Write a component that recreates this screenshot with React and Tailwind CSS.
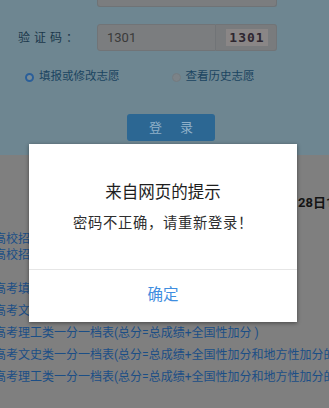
export default function App() {
  const cjk = { fontFamily: 'Roboto, "Noto Sans CJK SC", sans-serif' };
  const links = [
    "高考填报志愿指南及注意事项说明",
    "高考文史类一分一档表(总分=总成绩+全国性加分 )",
    "高考理工类一分一档表(总分=总成绩+全国性加分 )",
    "高考文史类一分一档表(总分=总成绩+全国性加分和地方性加分的最高值)",
    "高考理工类一分一档表(总分=总成绩+全国性加分和地方性加分的最高值)",
  ];
  return (
    <div className="relative w-[329px] h-[408px] overflow-hidden bg-[#7f7f7f]" style={cjk}>
      {/* top form section */}
      <div className="h-[155px] bg-[#6e8691] flex flex-col">
        <div className="ml-[97px] w-[180px] h-[7px] bg-[#7b7d7f] border border-t-0 border-[#6f7376] rounded-b-[3px]" />
        <div className="mt-[17px] flex items-center h-[27px]">
          <div className="w-[97px] pl-[18px] text-[12px] tracking-[4px] text-[#1b384b] whitespace-nowrap">验证码：</div>
          <div className="w-[119px] h-[27px] bg-[#7b7d7f] border border-[#717477] rounded-l-[3px] flex items-center pl-[9px] text-[13px] text-[#3a3a3a]">1301</div>
          <div className="w-[61px] h-[27px] bg-[#797b7d] border border-l-0 border-[#717477] rounded-r-[3px] flex items-center pl-[10px]">
            <div className="w-[42px] h-[17px] bg-[#8a8686] flex items-center justify-center text-[13px] font-bold tracking-[1px] text-[#2e2630]" style={{ fontFamily: '"DejaVu Sans Mono", "Liberation Mono", monospace' }}>1301</div>
          </div>
        </div>
        <div className="mt-[18px] flex items-center h-[16px] text-[11.5px] text-[#1a4460]">
          <div className="ml-[25px] w-[9px] h-[9px] rounded-full border-[2.5px] border-[#2a5f9a] bg-[#7a8c96]" />
          <span className="ml-[5px] whitespace-nowrap">填报或修改志愿</span>
          <div className="ml-[52px] w-[9px] h-[9px] rounded-full bg-[#7c8388] border border-[#737b80]" />
          <span className="ml-[5px] whitespace-nowrap">查看历史志愿</span>
        </div>
        <div className="mt-[29px] ml-[127px] w-[88px] h-[27px] rounded-[3px] bg-[#2c6793] flex items-center justify-center text-[13px] text-[#8fb0c8] tracking-[18px] pl-[18px]">登录</div>
      </div>

      {/* lower content */}
      <div className="flex flex-col text-[12px] whitespace-nowrap">
        <div className="mt-[38px] h-[20px] pl-[298px] flex items-center font-bold text-[13px] text-[#141414]">28日16:00</div>
        <div className="mt-[18px] h-[16px] ml-[-6px] flex items-center text-[#1b4e86]">高校招生章程及录取规则查询</div>
        <div className="h-[16px] ml-[-6px] flex items-center text-[#1b4e86]">高校招生计划查询</div>
        <div className="mt-[15px] flex flex-col">
          {links.map((t, i) => (
            <div key={i} className="h-[22px] ml-[-6px] flex items-center text-[#1b4e86]">{t}</div>
          ))}
        </div>
      </div>

      {/* dialog */}
      <div className="absolute left-[29px] top-[144px] w-[268px] h-[178px] bg-white shadow-[0_1px_4px_rgba(0,0,0,0.45)] flex flex-col">
        <div className="pt-[38px] h-[22px] box-content flex items-center justify-center text-[16.5px] leading-[22px] text-[#1e1e1e]">来自网页的提示</div>
        <div className="mt-[10px] h-[20px] flex items-center justify-center text-[14.3px] tracking-[0.7px] text-[#2e2e2e]">密码不正确，请重新登录！</div>
        <div className="mt-[35px] border-t border-[#e6e6e6]" />
        <div className="flex-1 flex items-center justify-center text-[15.5px] text-[#3f8ee0]">确定</div>
      </div>
    </div>
  );
}
